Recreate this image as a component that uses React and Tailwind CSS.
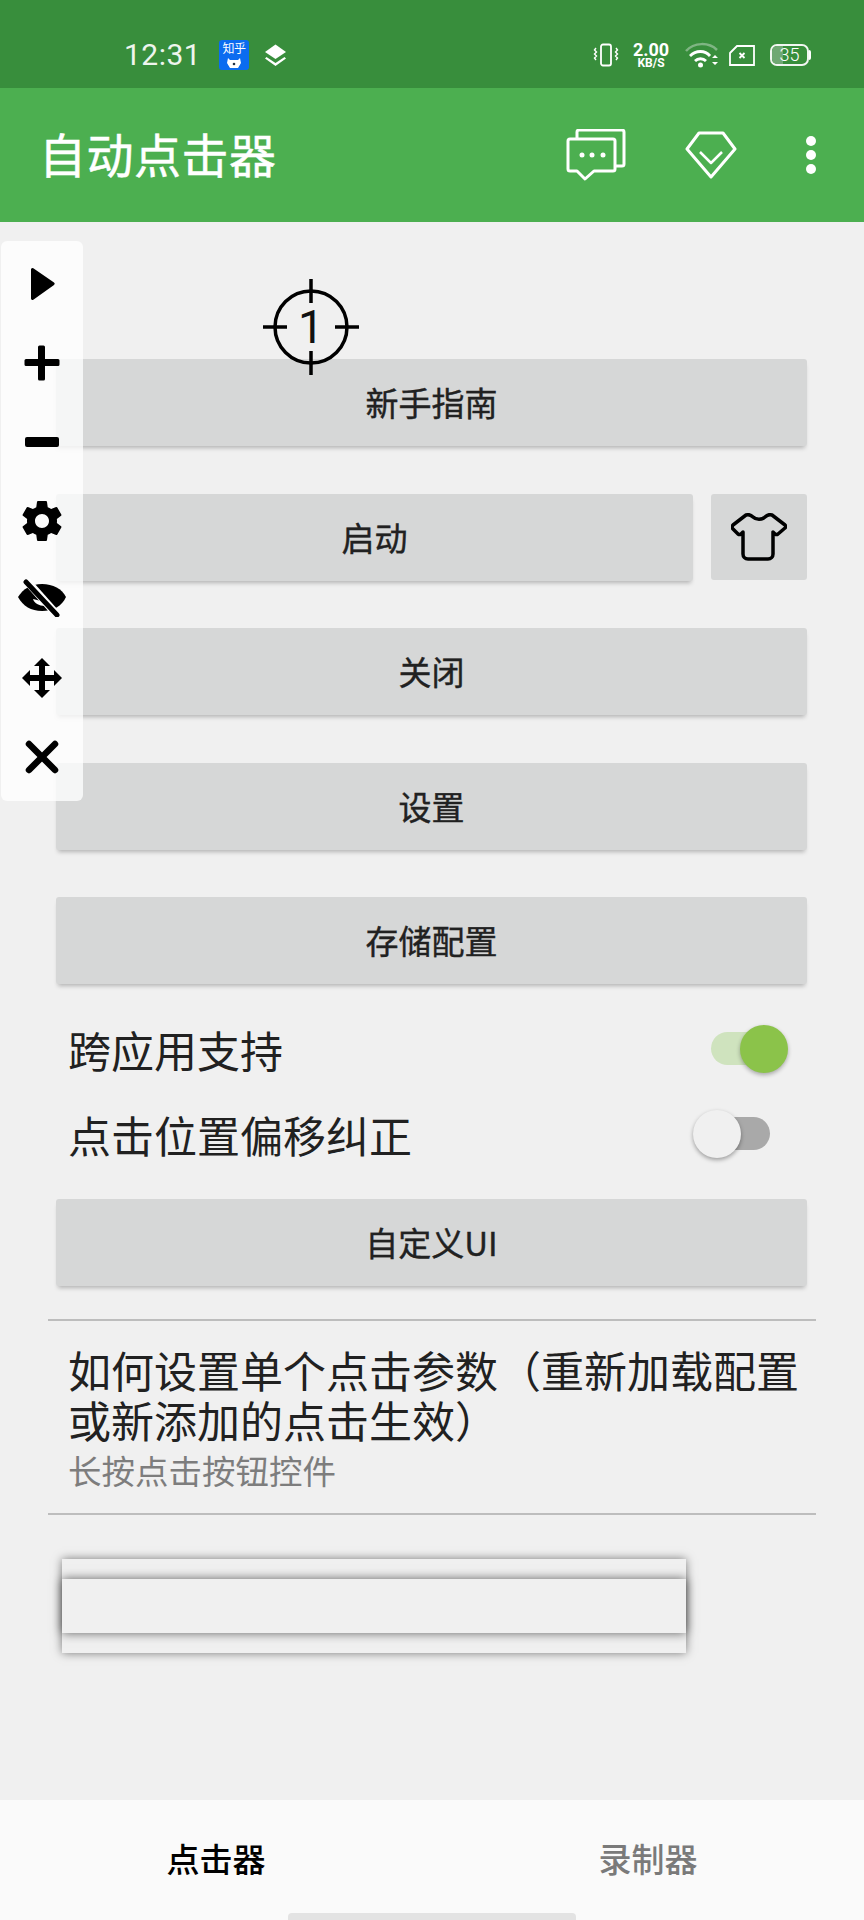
import React from "react";

function Btn({ children, className = "" }) {
  return (
    <div className={`h-[87px] bg-[#d6d7d7] rounded-[3px] shadow-[0_4px_4px_-2px_rgba(0,0,0,0.25)] flex items-center justify-center text-[33px] leading-none font-normal [-webkit-text-stroke:0.4px_#212121] text-[#212121] ${className}`}>
      {children}
    </div>
  );
}

function StatusBar() {
  return (
    <div className="h-[88px] bg-[#388e3c] flex items-center pt-[22px] text-white shrink-0">
      <span className="ml-[124px] w-[72px] text-[30px] leading-none font-['Roboto',sans-serif] font-normal tracking-[0.5px] text-[#eef5ee]">12:31</span>
      <div className="ml-[23px] w-[30px] h-[30px] rounded-[3px] bg-[#0b6cf0] flex flex-col items-center overflow-hidden">
        <span className="text-[12px] leading-[14px] mt-[1px] whitespace-nowrap tracking-[-0.5px]">知乎</span>
        <svg width="16" height="11" viewBox="0 0 16 11" className="mt-[2px]"><path d="M2 1l2 2h8l2-2 1 5-3 5H4L1 6z" fill="#fff" /><circle cx="8" cy="7" r="1.3" fill="#234" /></svg>
      </div>
      <svg width="23" height="24" viewBox="0 0 23 24" className="ml-[15px]">
        <path d="M11.5 1.5L22 9l-10.5 7L1 9z" fill="#fff" />
        <path d="M2.5 14l9 6 9-6 1.500 1.500L11.500 23 1 15.500z" fill="#fff" />
      </svg>
      <div className="ml-auto flex items-center">
        <svg width="26" height="24" viewBox="0 0 26 24" fill="none" stroke="#fff" strokeWidth="1.8">
          <rect x="8" y="1.500" width="10" height="21" rx="2" />
          <path d="M3 5l-1.500 2 2 2-2 2 2 2-2 2 1.500 2M23 5l1.500 2-2 2 2 2-2 2 2 2-1.500 2" strokeWidth="1.400" />
        </svg>
        <div className="ml-[13px] w-[38px] flex flex-col items-center font-['Roboto',sans-serif] font-bold">
          <span className="text-[18px] leading-[17px]">2.00</span>
          <span className="text-[12px] leading-[11px]">KB/S</span>
        </div>
        <svg width="34" height="26" viewBox="0 0 34 26" fill="none" className="ml-[15px]">
          <path d="M1 9C9 0 24 0 32 8" stroke="#7fb583" strokeWidth="2.500" />
          <path d="M5 14c6-6 15-6 20 0" stroke="#fff" strokeWidth="2.800" />
          <path d="M10 19c3-3 8-3 11 0" stroke="#fff" strokeWidth="2.800" />
          <circle cx="15.500" cy="23" r="2.500" fill="#fff" />
          <path d="M27 16l3-3 3 3zM27 20l3 3 3-3z" fill="#fff" />
        </svg>
        <svg width="26" height="21" viewBox="0 0 26 21" fill="none" className="ml-[10px]">
          <path d="M1 8l7-7h17v19H1z" stroke="#fff" strokeWidth="1.800" />
          <path d="M10.500 8l5 5M15.500 8l-5 5" stroke="#fff" strokeWidth="1.800" />
        </svg>
        <div className="ml-[15px] relative w-[39px] h-[22px] rounded-[7px] border-2 border-[#f1f6f1] flex items-center justify-center overflow-hidden">
          <div className="absolute left-0 top-0 bottom-0 w-[11px] bg-[#6fa873]"></div>
          <span className="relative text-[18px] leading-none font-['Roboto',sans-serif] font-light">35</span>
        </div>
        <div className="mr-[53px] w-[2px] h-[10px] bg-white rounded-r"></div>
      </div>
    </div>
  );
}

function Toolbar() {
  return (
    <div className="h-[134px] bg-[#4caf50] flex items-center shrink-0 text-white">
      <span className="ml-[39px] mb-[6px] text-[47px] leading-none font-normal [-webkit-text-stroke:0.5px_#fff] tracking-[0.5px]">自动点击器</span>
      <svg width="60" height="54" viewBox="0 0 60 54" fill="none" stroke="#fff" strokeWidth="3" strokeLinejoin="round" className="ml-auto mt-[2px]">
        <path d="M11 9V3a2 2 0 0 1 2-2h43a2 2 0 0 1 2 2v32a2 2 0 0 1-2 2h-6" />
        <path d="M4 10h43a2 2 0 0 1 2 2v28a2 2 0 0 1-2 2H28l-9 8-8-8H4a2 2 0 0 1-2-2V12a2 2 0 0 1 2-2z" />
        <circle cx="16" cy="26" r="2.500" fill="#fff" stroke="none" />
        <circle cx="26" cy="26" r="2.500" fill="#fff" stroke="none" />
        <circle cx="37" cy="26" r="2.500" fill="#fff" stroke="none" />
      </svg>
      <svg width="52" height="48" viewBox="0 0 52 48" fill="none" stroke="#fff" strokeWidth="3" strokeLinejoin="round" className="ml-[59px]">
        <path d="M14 2h24l12 16-24 28L2 18z" />
        <path d="M15 21l11 11 11-11" strokeWidth="2.500" />
      </svg>
      <div className="ml-[69px] mr-[48px] flex flex-col gap-[4px]">
        <div className="w-[10px] h-[10px] rounded-full bg-white"></div>
        <div className="w-[10px] h-[10px] rounded-full bg-white"></div>
        <div className="w-[10px] h-[10px] rounded-full bg-white"></div>
      </div>
    </div>
  );
}

function Panel() {
  return (
    <div className="absolute left-[1px] top-[241px] w-[82px] h-[560px] rounded-[6px] bg-[rgba(255,255,255,0.76)] flex flex-col items-center">
      <svg width="27" height="34" viewBox="0 0 27 34" className="mt-[26px]"><path d="M2 2.500v29a1.500 1.500 0 0 0 2.300 1.300L25 18a1.500 1.500 0 0 0 0-2.400L4.300 1.200A1.500 1.500 0 0 0 2 2.500z" fill="#000" /></svg>
      <svg width="36" height="36" viewBox="0 0 36 36" className="mt-[44px]"><path d="M14 2a1.500 1.500 0 0 1 1.500-1.500h4A1.500 1.500 0 0 1 21 2v12h13a1.500 1.500 0 0 1 1.500 1.500v4A1.500 1.500 0 0 1 34 21H21v13a1.500 1.500 0 0 1-1.500 1.500h-4A1.500 1.500 0 0 1 14 34V21H2a1.500 1.500 0 0 1-1.500-1.500v-4A1.500 1.500 0 0 1 2 14h12z" fill="#000" /></svg>
      <div className="mt-[56px] w-[34px] h-[10px] rounded-[2px] bg-black"></div>
      <svg width="48" height="48" viewBox="0 0 24 24" className="mt-[50px]"><path fill="#000" d="M19.430 12.980c.04-.32.070-.64.070-.98s-.030-.66-.070-.98l2.110-1.650c.19-.15.240-.42.120-.64l-2-3.460c-.12-.22-.39-.30-.61-.22l-2.490 1c-.52-.40-1.080-.73-1.690-.98l-.38-2.650C14.460 2.180 14.250 2 14 2h-4c-.25 0-.46.180-.49.420l-.38 2.650c-.61.250-1.170.590-1.690.98l-2.490-1c-.23-.090-.49 0-.61.220l-2 3.460c-.13.220-.070.490.12.640l2.110 1.650c-.04.320-.07.650-.07.980s.030.660.070.980l-2.110 1.650c-.19.150-.24.420-.12.640l2 3.460c.12.220.39.300.61.220l2.490-1c.52.400 1.080.730 1.690.980l.38 2.650c.030.240.240.420.490.420h4c.25 0 .460-.180.490-.420l.38-2.650c.610-.250 1.170-.590 1.690-.980l2.490 1c.230.090.490 0 .610-.220l2-3.460c.120-.220.070-.490-.120-.640l-2.110-1.650zM12 15.500c-1.930 0-3.500-1.570-3.500-3.500s1.570-3.500 3.500-3.500 3.500 1.570 3.500 3.500-1.570 3.500-3.500 3.500z" /></svg>
      <svg width="50" height="38" viewBox="0 0 50 38" className="mt-[34px]">
        <path d="M25 5C14 5 6 10 1 18c5 9 13 14 24 14s20-5 24-14C45 10 36 5 25 5z" fill="#000" />
        <path d="M16 20c1 4 6 7 12 7l-4-5z" fill="#fff" />
        <path d="M9 1l32 36" stroke="#fff" strokeWidth="8" />
        <path d="M9 3l31 33" stroke="#000" strokeWidth="5" strokeLinecap="round" />
      </svg>
      <svg width="40" height="40" viewBox="0 0 40 40" className="mt-[41px]">
        <path d="M20 0l8 8H23v9h9v-5l8 8-8 8v-5h-9v9h5l-8 8-8-8h5v-9H8v5l-8-8 8-8v5h9V8h-5z" fill="#000" />
      </svg>
      <svg width="34" height="34" viewBox="0 0 34 34" className="mt-[42px]"><path d="M4 4l26 26M30 4L4 30" stroke="#000" strokeWidth="6.500" strokeLinecap="round" /></svg>
    </div>
  );
}

function Crosshair() {
  return (
    <div className="absolute left-[263px] top-[279px] w-[96px] h-[96px]">
      <svg width="96" height="96" viewBox="0 0 96 96" fill="none" stroke="#000" strokeWidth="3.500" className="absolute inset-0">
        <circle cx="48" cy="48" r="36" />
        <path d="M48 0v24M48 72v24M0 48h24M72 48h24" />
      </svg>
      <span className="absolute inset-0 flex items-center justify-center text-[46px] leading-none text-[#111] font-['Roboto',sans-serif] font-normal">1</span>
    </div>
  );
}

function Switch({ on }) {
  return on ? (
    <div className="absolute right-[76px] top-[18px] w-[77px] h-[48px]">
      <div className="absolute left-0 right-[4px] top-[7px] h-[33px] rounded-full bg-[#cfe3be]"></div>
      <div className="absolute right-0 top-0 w-[48px] h-[48px] rounded-full bg-[#8bc34a] shadow-[0_2px_4px_rgba(0,0,0,0.3)]"></div>
    </div>
  ) : (
    <div className="absolute right-[94px] top-[18px] w-[77px] h-[48px]">
      <div className="absolute left-[4px] right-0 top-[7px] h-[33px] rounded-full bg-[#a9a9a9]"></div>
      <div className="absolute left-0 top-0 w-[48px] h-[48px] rounded-full bg-[#f0f0f0] shadow-[0_2px_4px_rgba(0,0,0,0.35)]"></div>
    </div>
  );
}

function Row({ label, on }) {
  return (
    <div className="relative h-[85px] flex items-center pl-[68px] text-[43px] leading-none text-[#212121]">
      {label}
      <Switch on={on} />
    </div>
  );
}

export default function App() {
  return (
    <div className="relative w-[864px] h-[1920px] overflow-hidden bg-[#f0f0f0] flex flex-col font-['Noto_Sans_CJK_SC','Noto_Sans',sans-serif]">
      <StatusBar />
      <Toolbar />
      <main className="flex-1 flex flex-col">
        <div className="flex flex-col gap-[47.6px] pl-[56px] pr-[57px] pt-[137px]">
          <Btn>新手指南</Btn>
          <div className="flex gap-[18px]">
            <Btn className="flex-1">启动</Btn>
            <div className="w-[96px] h-[86px] bg-[#d6d7d7] rounded-[3px] flex items-center justify-center">
              <svg width="56" height="48" viewBox="0 0 56 48" fill="none" stroke="#000" strokeWidth="3.500" strokeLinejoin="round">
                <path d="M15 2c3-1 5 0 7 2 3 3 9 3 12 0 2-2 4-3 7-2l13 10c1 1 1 2 0 3l-7 6c-1 .700-2 .700-3 0l-2-2v22c0 3-2 5-5 5H17c-3 0-5-2-5-5V19l-2 2c-1 .700-2 .700-3 0l-5-5c-1-1-1-3 0-4z" />
              </svg>
            </div>
          </div>
          <Btn>关闭</Btn>
          <Btn>设置</Btn>
          <Btn>存储配置</Btn>
        </div>
        <div className="mt-[23px] flex flex-col">
          <Row label="跨应用支持" on />
          <Row label="点击位置偏移纠正" />
        </div>
        <div className="mt-[22px] pl-[56px] pr-[57px]">
          <Btn>自定义UI</Btn>
        </div>
        <div className="mt-[33px] mx-[48px] h-[2px] bg-[#bdbdbd]"></div>
        <div className="pl-[68px] pr-[48px] h-[192px] pt-[23px]">
          <p className="text-[43px] leading-[50px] text-[#212121]">如何设置单个点击参数（重新加载配置或新添加的点击生效）</p>
          <p className="text-[33.5px] leading-[40px] mt-[6px] text-[#7d7d7d]">长按点击按钮控件</p>
        </div>
        <div className="mx-[48px] h-[2px] bg-[#bdbdbd]"></div>
        <div className="relative mt-[44px] ml-[62px] w-[624px] h-[94px] bg-[#f0f0f0] shadow-[0_0_9px_rgba(0,0,0,0.5)]">
          <div className="absolute left-0 right-0 top-[20px] h-[54px] bg-[#f0f0f0] shadow-[0_0_10px_rgba(0,0,0,0.6)]"></div>
        </div>
      </main>
      <div className="relative h-[120px] bg-[#fafafa] flex shrink-0 text-[33px] leading-none font-medium">
        <div className="flex-1 flex items-center justify-center pb-[4px] text-black">点击器</div>
        <div className="flex-1 flex items-center justify-center pb-[4px] text-[#7a7a7a]">录制器</div>
        <div className="absolute left-[288px] bottom-0 w-[288px] h-[7px] rounded-t-[4px] bg-[#e3e3e3]"></div>
      </div>
      <Crosshair />
      <Panel />
    </div>
  );
}
